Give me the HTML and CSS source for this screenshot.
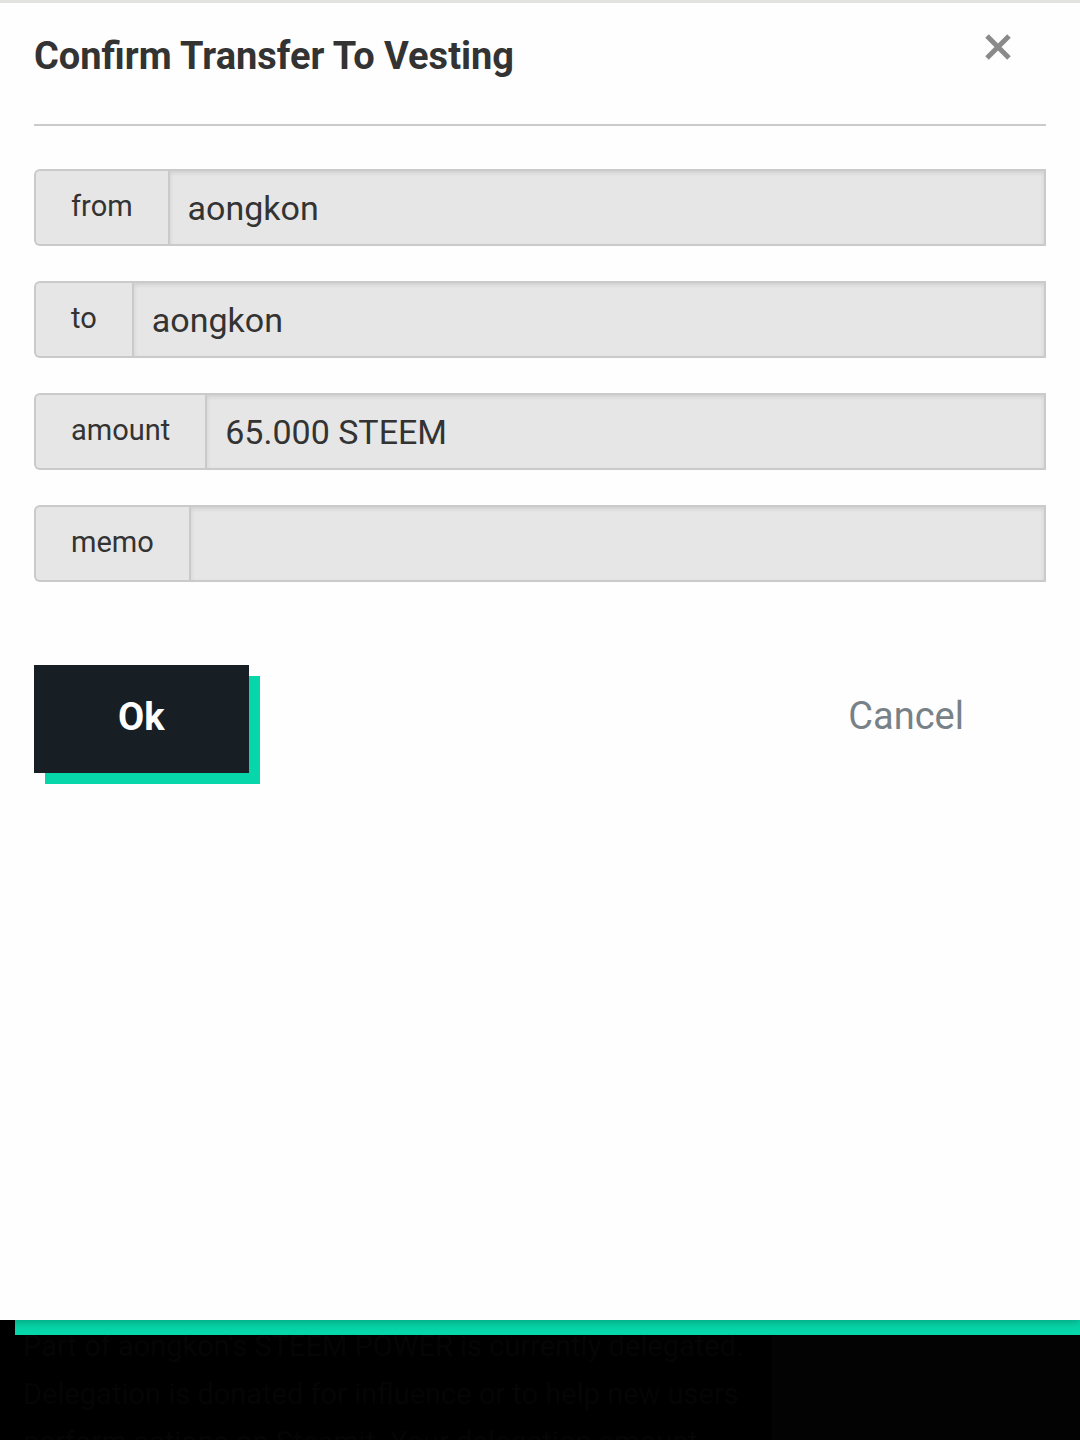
FILE: index.html
```html
<!DOCTYPE html>
<html lang="en">
<head>
    <meta charset="UTF-8">
    <meta name="viewport" content="width=device-width, initial-scale=1.0">
    <title>Confirm Transfer To Vesting</title>
    <link rel="stylesheet" href="styles.css">
</head>
<body>
    <div class="modal" role="dialog" aria-labelledby="modal-title">
        <div class="modal-header">
            <h1 id="modal-title">Confirm Transfer To Vesting</h1>
            <button type="button" class="close-button" aria-label="Close">
                <svg viewBox="0 0 26 26" width="26" height="26">
                    <path d="M2 2L24 24M24 2L2 24" stroke="#8a8a8a" stroke-width="5" fill="none"/>
                </svg>
            </button>
        </div>
        <form class="confirm-form">
            <div class="input-group">
                <label for="from">from</label>
                <input type="text" id="from" value="aongkon" readonly>
            </div>
            <div class="input-group">
                <label for="to">to</label>
                <input type="text" id="to" value="aongkon" readonly>
            </div>
            <div class="input-group">
                <label for="amount">amount</label>
                <input type="text" id="amount" value="65.000 STEEM" readonly>
            </div>
            <div class="input-group">
                <label for="memo">memo</label>
                <input type="text" id="memo" value="" readonly>
            </div>
            <div class="actions">
                <button type="submit" class="button">Ok</button>
                <button type="button" class="button hollow">Cancel</button>
            </div>
        </form>
    </div>
    <!-- wallet page behind the overlay -->
    <div class="backdrop">
        <p>Part of aongkon's STEEM POWER is currently delegated. Delegation is donated for influence or to help new users perform actions on Steemit. Your delegation amount</p>
    </div>
</body>
</html>
```

FILE: styles.css
```css
*
{
  margin: 0;
  padding: 0;
  box-sizing: border-box;
  font-family: Roboto, "Liberation Sans", sans-serif;
}
body{
  display: flex;
  flex-direction: column;
  min-height: 100vh;
  overflow-x: hidden;
  background: #000;
  color: #333;
}
.modal{
  position: relative;
  flex: 1;
  padding: 0 34px;
  border-top: 3px solid #e2e2e1;
  background: #fefefe;
  box-shadow: 0 2px 8px 0 rgba(0, 0, 0, 0.25),
  15px 15px 0 0 #06d6a9;
}
.modal-header{
  display: flex;
  justify-content: space-between;
  align-items: flex-start;
  padding: 28px 35px 44px 0;
  margin-bottom: 43px;
  border-bottom: 2px solid #cacaca;
}
.modal-header h1{
  font-size: 38px;
  font-weight: 700;
  line-height: 50px;
  margin-bottom: -1px;
}
.close-button{
  padding-top: 3px;
  border: none;
  background: none;
  cursor: pointer;
}
.close-button svg{
  display: block;
}
.input-group{
  display: flex;
  height: 77px;
  margin-bottom: 35px;
}
.input-group label{
  display: flex;
  align-items: center;
  padding: 0 35px 3px;
  border: 2px solid #cacaca;
  border-right: none;
  border-radius: 6px 0 0 6px;
  background: #e6e6e6;
  font-size: 29px;
}
.input-group input{
  flex: 1;
  min-width: 0;
  padding: 0 18px;
  border: 2px solid #cacaca;
  border-radius: 0;
  background: #e6e6e6;
  box-shadow: inset 0 2px 4px rgba(10, 10, 10, 0.1);
  font-size: 34px;
  color: #333;
  outline: none;
}
.actions{
  display: flex;
  justify-content: space-between;
  padding: 48px 0;
}
.button{
  height: 108px;
  padding: 0 84px 4px;
  border: none;
  background: #171f24;
  box-shadow: 11px 11px 0 0 #06d6a9;
  font-size: 38px;
  font-weight: 700;
  color: #fff;
  cursor: pointer;
}
.button.hollow{
  padding: 0 82px 6px;
  background: transparent;
  box-shadow: none;
  font-weight: 400;
  color: #788187;
}
.backdrop{
  height: 120px;
  overflow: hidden;
  background: linear-gradient(90deg, #000 772px, #030303 772px);
}
.backdrop p{
  max-width: 772px;
  padding: 2px 16px 2px 23px;
  font-size: 29px;
  line-height: 48px;
  color: #050505;
}
```
